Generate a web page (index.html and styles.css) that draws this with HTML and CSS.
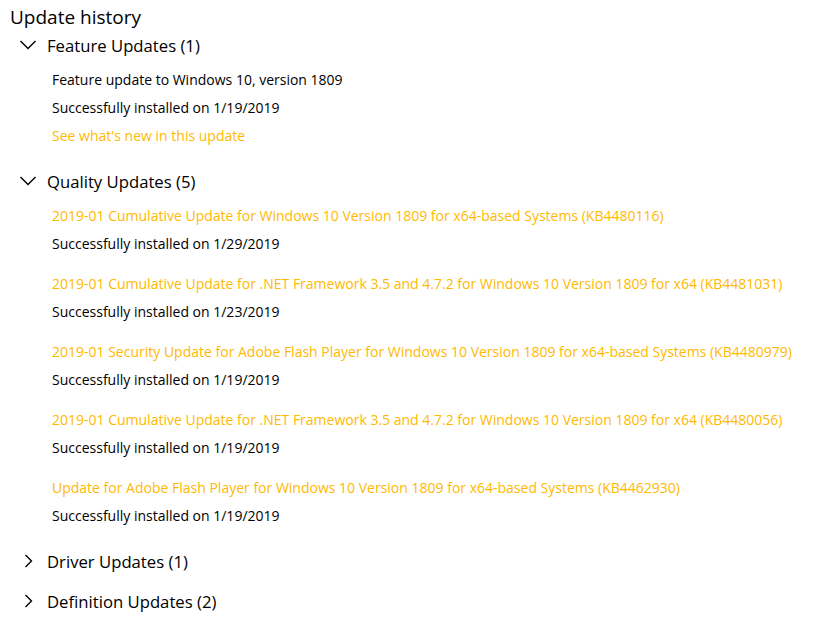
FILE: index.html
```html
<!DOCTYPE html>
<html lang="en">
<head>
    <meta charset="UTF-8">
    <title>Update history</title>
    <link rel="stylesheet" href="styles.css">
</head>
<body>

<h1 class="page-title">Update history</h1>

<div class="section open">
    <div class="section-head">
        <svg class="chev" viewBox="0 0 16 16"><path d="M0.5 4 L8 11.5 L15.5 4"/></svg>
        <span>Feature Updates (1)</span>
    </div>
    <div class="section-body">
        <div class="item">
            <div class="line">Feature update to Windows 10, version 1809</div>
            <div class="line">Successfully installed on 1/19/2019</div>
            <div class="line link">See what's new in this update</div>
        </div>
    </div>
</div>

<div class="section open">
    <div class="section-head">
        <svg class="chev" viewBox="0 0 16 16"><path d="M0.5 4 L8 11.5 L15.5 4"/></svg>
        <span>Quality Updates (5)</span>
    </div>
    <div class="section-body">
        <div class="item">
            <div class="line link">2019-01 Cumulative Update for Windows 10 Version 1809 for x64-based Systems (KB4480116)</div>
            <div class="line">Successfully installed on 1/29/2019</div>
        </div>
        <div class="item">
            <div class="line link">2019-01 Cumulative Update for .NET Framework 3.5 and 4.7.2 for Windows 10 Version 1809 for x64 (KB4481031)</div>
            <div class="line">Successfully installed on 1/23/2019</div>
        </div>
        <div class="item">
            <div class="line link">2019-01 Security Update for Adobe Flash Player for Windows 10 Version 1809 for x64-based Systems (KB4480979)</div>
            <div class="line">Successfully installed on 1/19/2019</div>
        </div>
        <div class="item">
            <div class="line link">2019-01 Cumulative Update for .NET Framework 3.5 and 4.7.2 for Windows 10 Version 1809 for x64 (KB4480056)</div>
            <div class="line">Successfully installed on 1/19/2019</div>
        </div>
        <div class="item">
            <div class="line link">Update for Adobe Flash Player for Windows 10 Version 1809 for x64-based Systems (KB4462930)</div>
            <div class="line">Successfully installed on 1/19/2019</div>
        </div>
    </div>
</div>

<div class="section">
    <div class="section-head">
        <svg class="chev" viewBox="0 0 16 16"><path d="M5.5 2 L11.5 8 L5.5 14"/></svg>
        <span>Driver Updates (1)</span>
    </div>
</div>

<div class="section">
    <div class="section-head">
        <svg class="chev" viewBox="0 0 16 16"><path d="M5.5 2 L11.5 8 L5.5 14"/></svg>
        <span>Definition Updates (2)</span>
    </div>
</div>

</body>
</html>
```

FILE: styles.css
```css
body { margin: 0; background: #fff; color: #000; font-family: "Open Sans", "Noto Sans", sans-serif; }
.page-title { margin: 0; padding: 4px 0 0 10px; font-size: 19px; font-weight: normal; line-height: 26px; }
.section { margin-bottom: 8px; }
.section-head { display: flex; align-items: center; box-sizing: border-box; height: 32px; padding-bottom: 2px; font-size: 16.7px; }
.chev { width: 16px; height: 16px; margin: 0 11px 0 20px; fill: none; stroke: #000; stroke-width: 1.4; }
.section-body { padding: 4px 0 8px 52px; font-size: 14px; }
.item { margin-bottom: 12px; }
.item:last-child { margin-bottom: 0; }
.line { line-height: 28px; white-space: nowrap; }
.link { color: #ffb900; }
```
